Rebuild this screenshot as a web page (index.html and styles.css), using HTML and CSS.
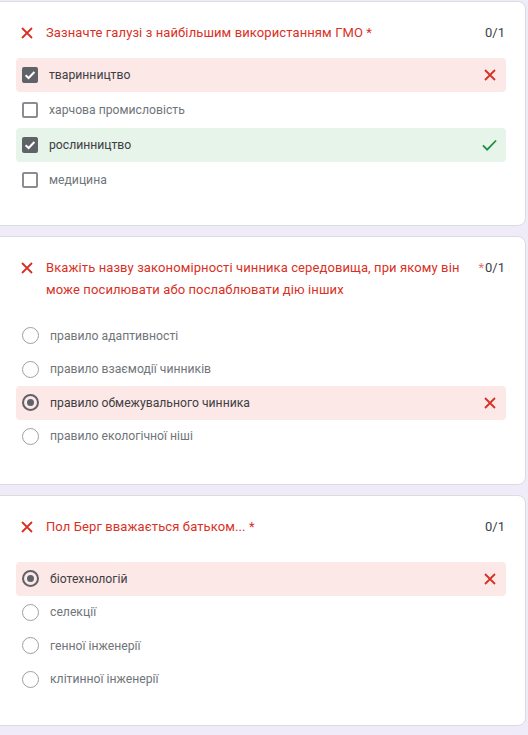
FILE: index.html
```html
<!DOCTYPE html>
<html lang="uk">
<head>
<meta charset="utf-8">
<title>Результати тесту</title>
<link rel="stylesheet" href="styles.css">
</head>
<body>
<main class="page">
  <section class="card card--one">
    <header class="q-head">
      <svg class="q-x" viewBox="0 0 12 12" aria-hidden="true"><path d="M1 1 L11 11 M11 1 L1 11"/></svg>
      <h2 class="q-title">Зазначте галузі з найбільшим використанням ГМО <span class="req">*</span></h2>
      <span class="score">0/1</span>
    </header>
    <ul class="options options--check">
      <li class="opt opt--wrong">
        <span class="cb cb--on"><svg viewBox="0 0 16 16" aria-hidden="true"><path d="M3.6 8.2 L6.6 11 L12.4 5"/></svg></span>
        <span class="opt-label">тваринництво</span>
        <svg class="mark mark--x" viewBox="0 0 12 12" aria-hidden="true"><path d="M1 1 L11 11 M11 1 L1 11"/></svg>
      </li>
      <li class="opt">
        <span class="cb"></span>
        <span class="opt-label opt-label--dim">харчова промисловість</span>
      </li>
      <li class="opt opt--right">
        <span class="cb cb--on"><svg viewBox="0 0 16 16" aria-hidden="true"><path d="M3.6 8.2 L6.6 11 L12.4 5"/></svg></span>
        <span class="opt-label">рослинництво</span>
        <svg class="mark mark--ok" viewBox="0 0 16 12" aria-hidden="true"><path d="M1 6.5 L5.5 11 L15 1.2"/></svg>
      </li>
      <li class="opt">
        <span class="cb"></span>
        <span class="opt-label opt-label--dim">медицина</span>
      </li>
    </ul>
  </section>

  <section class="card card--two">
    <header class="q-head">
      <svg class="q-x" viewBox="0 0 12 12" aria-hidden="true"><path d="M1 1 L11 11 M11 1 L1 11"/></svg>
      <h2 class="q-title">Вкажіть назву закономірності чинника середовища, при якому він може посилювати або послаблювати дію інших</h2>
      <span class="score"><span class="req">*</span>0/1</span>
    </header>
    <ul class="options options--radio options--tight">
      <li class="opt">
        <span class="rb"></span>
        <span class="opt-label opt-label--dim">правило адаптивності</span>
      </li>
      <li class="opt">
        <span class="rb"></span>
        <span class="opt-label opt-label--dim">правило взаємодії чинників</span>
      </li>
      <li class="opt opt--wrong">
        <span class="rb rb--on"></span>
        <span class="opt-label">правило обмежувального чинника</span>
        <svg class="mark mark--x" viewBox="0 0 12 12" aria-hidden="true"><path d="M1 1 L11 11 M11 1 L1 11"/></svg>
      </li>
      <li class="opt">
        <span class="rb"></span>
        <span class="opt-label opt-label--dim">правило екологічної ніші</span>
      </li>
    </ul>
  </section>

  <section class="card card--three">
    <header class="q-head">
      <svg class="q-x" viewBox="0 0 12 12" aria-hidden="true"><path d="M1 1 L11 11 M11 1 L1 11"/></svg>
      <h2 class="q-title">Пол Берг вважається батьком... <span class="req">*</span></h2>
      <span class="score">0/1</span>
    </header>
    <ul class="options options--radio options--loose">
      <li class="opt opt--wrong">
        <span class="rb rb--on"></span>
        <span class="opt-label">біотехнологій</span>
        <svg class="mark mark--x" viewBox="0 0 12 12" aria-hidden="true"><path d="M1 1 L11 11 M11 1 L1 11"/></svg>
      </li>
      <li class="opt">
        <span class="rb"></span>
        <span class="opt-label opt-label--dim">селекції</span>
      </li>
      <li class="opt">
        <span class="rb"></span>
        <span class="opt-label opt-label--dim">генної інженерії</span>
      </li>
      <li class="opt">
        <span class="rb"></span>
        <span class="opt-label opt-label--dim">клітинної інженерії</span>
      </li>
    </ul>
  </section>
</main>
</body>
</html>
```

FILE: styles.css
```css
* { box-sizing: border-box; }

html, body {
  margin: 0;
  padding: 0;
  background: #f0ebf8;
  font-family: Roboto, "Noto Sans", "Liberation Sans", sans-serif;
  color: #202124;
  overflow: hidden;
}

.page {
  display: flex;
  flex-direction: column;
  gap: 10px;
  padding-top: 1px;
  margin-left: -8px;
  width: 534px;
}

.card {
  background: #fff;
  border: 1px solid #dadce0;
  border-radius: 8px;
  padding: 20px 19px 28px 23px;
}

.card--one { height: 225px; }
.card--two { height: 249px; }
.card--three { height: 231px; }

.q-head {
  display: flex;
  align-items: flex-start;
}

.q-x {
  flex: none;
  width: 12px;
  height: 12px;
  margin: 5px 13px 0 5px;
  stroke: #d93025;
  stroke-width: 1.8;
  fill: none;
}

.q-title {
  flex: 1;
  margin: 0;
  font-size: 13px;
  font-weight: 400;
  line-height: 22px;
  letter-spacing: 0.1px;
  color: #d93025;
  padding-right: 14px;
}

.req { color: #d93025; }
.score .req { color: #e57368; margin-right: 1px; }

.score {
  flex: none;
  font-size: 13px;
  line-height: 22px;
  color: #3c4043;
  margin-right: 1px;
}

.options {
  list-style: none;
  margin: 14px 0 0;
  padding: 0;
  display: flex;
  flex-direction: column;
}

.options--check { gap: 1px; }
.options--check .opt { height: 34px; }

.options--radio .opt { height: 33.5px; }
.options--tight { margin-top: 18px; }
.options--loose { margin-top: 24px; }

.opt {
  display: flex;
  align-items: center;
  border-radius: 4px;
  padding: 0 10px 0 6px;
}

.opt--wrong { background: #fce8e6; }
.opt--right { background: #e6f4ea; }

.opt-label {
  flex: 1;
  margin-left: 11px;
  font-size: 12.2px;
  color: #3c4043;
}

.opt-label--dim { color: #70757a; }

.cb {
  flex: none;
  width: 16px;
  height: 16px;
  border: 2px solid #8a8d91;
  border-radius: 2px;
  display: flex;
  align-items: center;
  justify-content: center;
}

.cb--on {
  background: #5f6368;
  border-color: #5f6368;
}

.cb svg {
  width: 16px;
  height: 16px;
  flex: none;
  fill: none;
  stroke: #fff;
  stroke-width: 2;
}

.rb {
  flex: none;
  width: 17px;
  height: 17px;
  border: 1.5px solid #9aa0a6;
  border-radius: 50%;
  display: flex;
  align-items: center;
  justify-content: center;
}

.rb--on {
  border: 2px solid #5f6368;
}

.rb--on::after {
  content: "";
  width: 7px;
  height: 7px;
  border-radius: 50%;
  background: #5f6368;
}

.mark {
  flex: none;
  fill: none;
}

.mark--x {
  width: 12px;
  height: 12px;
  stroke: #d93025;
  stroke-width: 1.8;
}

.mark--ok {
  width: 15px;
  height: 12px;
  stroke: #1e8e3e;
  stroke-width: 1.9;
  margin-right: -1px;
}
```
